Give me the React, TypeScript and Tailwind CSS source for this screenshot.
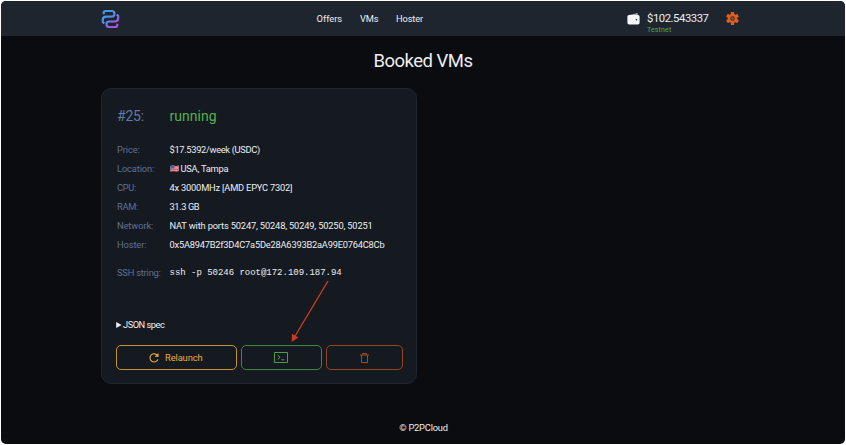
import type { ReactNode } from "react";

type RowProps = { label: string; labelClass?: string; valueClass?: string; children: ReactNode };

function Row({ label, labelClass = "tracking-[-0.1px]", valueClass = "", children }: RowProps) {
  return (
    <div className="flex h-[19px] items-center whitespace-nowrap">
      <dt className="w-[52.5px] shrink-0 text-[#5f7096]">
        <span className={labelClass}>{label}</span>
      </dt>
      <dd className={`flex items-center ${valueClass}`}>{children}</dd>
    </div>
  );
}

function Logo() {
  return (
    <svg className="h-[20px] w-[19px]" viewBox="0 0 19 20" fill="none">
      <defs>
        <linearGradient id="brand" x1="3" y1="2" x2="17" y2="19" gradientUnits="userSpaceOnUse">
          <stop offset="0.25" stopColor="#4399e8" />
          <stop offset="0.5" stopColor="#6480ea" />
          <stop offset="0.75" stopColor="#a355df" />
        </linearGradient>
      </defs>
      <g stroke="url(#brand)" strokeWidth="2.2">
        <path d="M2.7 5.2V4q0-2 2-2h6q2.7 0 2.7 2.5V5q0 2.6-2.7 2.6H5.2Q1.8 7.6 1.8 10.8v2.2l1.5 1.6" />
        <path d="M16.3 14.8v1.2q0 2-2 2H8.2q-2.7 0-2.7-2.4v-.5q0-2.6 2.7-2.6h5.6q3.4 0 3.4-3.2V7l-1.4-1.6" />
      </g>
    </svg>
  );
}

function Wallet() {
  return (
    <svg className="h-[12px] w-[13px]" viewBox="0 0 13 12">
      <path d="M1.2 2.3 9.5.4q1.2-.2 1.5 1.1l-8.5.6H11q1.6 0 1.6 1.6v6q0 1.7-1.7 1.7H2.1Q.4 11.4.4 9.7V3.5q0-.8.8-1.2Z" fill="#f5f6f8" />
      <circle cx="9.4" cy="6.7" r="0.8" fill="#1f252e" />
    </svg>
  );
}

function Gear() {
  return (
    <svg className="h-[13px] w-[13px]" viewBox="0 0 24 24">
      <g fill="#dc5f24">
        <circle cx="12" cy="12" r="8.8" />
        {[0, 60, 120].map((a) => (
          <rect key={a} x="9" y="0" width="6" height="24" rx="1" transform={`rotate(${a} 12 12)`} />
        ))}
      </g>
      <circle cx="12" cy="12" r="3.3" fill="#b54e22" stroke="#4a2c24" strokeWidth="1.9" />
    </svg>
  );
}

function Flag() {
  return (
    <svg className="mr-[2px] h-[7px] w-[9px]" viewBox="0 0 9 7">
      <path d="M.4 1Q2.5.1 4.6.7T8.7.5v5.4q-2 .7-4.1.2T.4 6.5Z" fill="#f1cfd3" />
      <path d="M4 1.2q2.4.5 4.7 0M4 2.9q2.4.5 4.7 0M.4 4.6q2-.6 4.1-.1t4.2-.1M.4 6.1q2-.6 4.1-.1t4.2-.2" stroke="#d4464f" strokeWidth="1" fill="none" />
      <path d="M.4 1Q2.3.2 4.3.6v3.1q-2-.4-3.9.2Z" fill="#4267a8" />
    </svg>
  );
}

export default function App() {
  return (
    <div className="h-[445px] w-[846px] bg-white p-px font-['Roboto','Noto_Sans',sans-serif] text-[9.3px] leading-none text-[#eceef2]">
      <div className="relative flex h-[443px] flex-col overflow-hidden rounded-[5px] bg-[#0b0c10]">
        <header className="flex h-[35px] shrink-0 items-center bg-[#1f252e] pl-[100px]">
          <Logo />
          <nav className="ml-[196.5px] flex whitespace-nowrap">
            <a className="w-[43.5px]">Offers</a>
            <a className="w-[36px] tracking-[-0.1px]">VMs</a>
            <a className="w-[230.5px] tracking-[-0.15px]">Hoster</a>
          </nav>
          <Wallet />
          <div className="ml-[7.5px] w-[78.5px] pt-[11px]">
            <div className="text-[11.3px] leading-[12px] tracking-[-0.45px]">$102.543337</div>
            <div className="text-[7px] leading-[10px] tracking-[0.15px] text-[#53a94c]">Testnet</div>
          </div>
          <Gear />
        </header>

        <h1 className="mt-[13px] h-[24px] text-center text-[18.5px] leading-[24px] tracking-[-0.5px]">Booked VMs</h1>

        <main className="ml-[100px] mt-[15px] flex h-[296px] w-[316px] shrink-0 flex-col rounded-[10px] border border-[#1f262f] bg-[#151a21] pl-[15px]">
          <div className="mt-[16px] flex h-[22px] items-center text-[14px]">
            <span className="w-[52.5px] tracking-[-0.2px] text-[#6678a5]">#25:</span>
            <span className="tracking-[0.05px] text-[#55b04c]">running</span>
          </div>
          <dl className="mt-[13px]">
            <Row label="Price:" valueClass="tracking-[-0.32px]">$17.5392/week (USDC)</Row>
            <Row label="Location:" labelClass="tracking-[-0.12px]" valueClass="tracking-[-0.23px]"><Flag />USA, Tampa</Row>
            <Row label="CPU:" labelClass="tracking-[-0.3px]" valueClass="tracking-[-0.2px]">4x 3000MHz [AMD EPYC 7302]</Row>
            <Row label="RAM:" labelClass="tracking-[-0.3px]" valueClass="tracking-[-0.4px]">31.3 GB</Row>
            <Row label="Network:" valueClass="tracking-[-0.16px]">NAT with ports 50247, 50248, 50249, 50250, 50251</Row>
            <Row label="Hoster:" valueClass="tracking-[-0.22px]">0x5A8947B2f3D4C7a5De28A6393B2aA99E0764C8Cb</Row>
            <div className="mt-[9px]">
              <Row label="SSH string:" labelClass="tracking-[-0.2px]">
                <code className="pt-[2px] font-['Liberation_Mono',monospace] text-[9px] tracking-[-0.02px]">ssh -p 50246 root@172.109.187.94</code>
              </Row>
            </div>
          </dl>
          <div className="-ml-px mt-[37px] flex h-[12px] items-center tracking-[-0.5px]">
            <svg className="mr-px h-[6px] w-[6px]" viewBox="0 0 6 6"><path d="M.2 0 5.6 3 .2 6Z" fill="#eceef2" /></svg>
            JSON spec
          </div>
          <div className="-ml-[1.5px] mt-[14px] flex gap-[4px]">
            <button className="flex h-[25px] w-[121.5px] items-center justify-center rounded-[5px] border border-[#c79130] pr-px tracking-[-0.1px] text-[#eaad38]">
              <svg className="mr-[6px] h-[10px] w-[10px]" viewBox="0 0 10 10" fill="none" stroke="currentColor" strokeWidth="1.1">
                <path d="M8.9 6.4A4.1 4.1 0 1 1 8.6 2.8M9 .4v2.9H6" />
                <path d="M9 1v2.3H6.7Z" fill="currentColor" stroke="none" />
              </svg>
              Relaunch
            </button>
            <button className="flex h-[25px] w-[81px] items-center justify-center rounded-[5px] border border-[#43843f] pr-px text-[#4c9e46]">
              <svg className="h-[11px] w-[14px]" viewBox="0 0 14 11" fill="none" stroke="currentColor">
                <path d="M.5.5h13v10H.5Z" />
                <path d="m3.7 3 2.4 2.3-2.4 2.3M7.3 7.8h3" />
              </svg>
            </button>
            <button className="flex h-[25px] w-[77px] items-center justify-center rounded-[5px] border border-[#94441f] text-[#9f4922]">
              <svg className="h-[10px] w-[9px]" viewBox="0 0 9 10" fill="none" stroke="currentColor">
                <path d="M0 2h9M2.6 2V.5h3.8V2M1.5 2v7.5h6V2" />
              </svg>
            </button>
          </div>
        </main>

        <footer className="mt-[38px] pl-[1px] text-center leading-[12px] tracking-[-0.2px]">© P2PCloud</footer>

        <svg className="absolute left-[286px] top-[276px] h-[70px] w-[48px]" viewBox="287 277 48 70">
          <path d="M328 281 294.5 337" stroke="#cb3a20" strokeWidth="1.4" />
          <path d="m291.7 342 .3-8.2 6.4 3.8Z" fill="#cb3a20" />
        </svg>
      </div>
    </div>
  );
}
